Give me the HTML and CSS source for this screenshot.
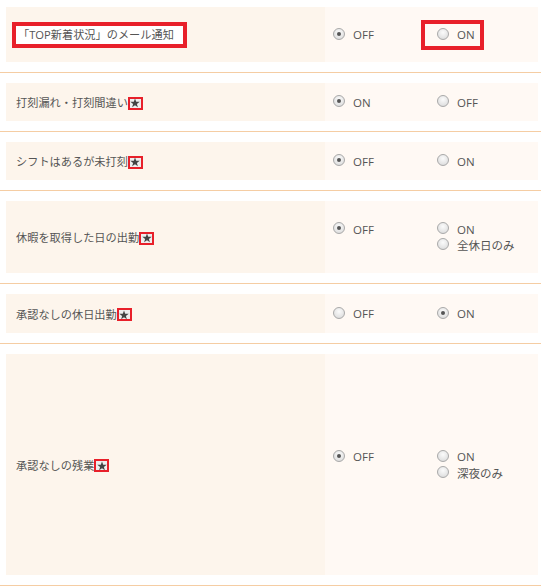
FILE: index.html
```html
<!DOCTYPE html>
<html lang="ja">
<head>
<meta charset="utf-8">
<link rel="stylesheet" href="styles.css">
</head>
<body>
<div class="list">
  <div class="row first">
    <div class="label h55"><span class="hlbox">「TOP新着状況」のメール通知</span></div>
    <div class="opts">
      <div class="group">
        <div class="col1"><div class="opt"><span class="radio on"></span>OFF</div></div>
        <div class="col2"><div class="opt hl"><span class="radio"></span>ON</div></div>
      </div>
    </div>
  </div>
  <div class="row">
    <div class="label h38">打刻漏れ・打刻間違い<span class="star"><svg viewBox="0 0 10 10" width="10" height="10"><path d="M5 0.4 6.2 3.7 9.7 3.8 6.9 5.9 7.9 9.3 5 7.3 2.1 9.3 3.1 5.9 0.3 3.8 3.8 3.7Z"/></svg></span></div>
    <div class="opts">
      <div class="group">
        <div class="col1"><div class="opt"><span class="radio on"></span>ON</div></div>
        <div class="col2"><div class="opt"><span class="radio"></span>OFF</div></div>
      </div>
    </div>
  </div>
  <div class="row">
    <div class="label h38">シフトはあるが未打刻<span class="star"><svg viewBox="0 0 10 10" width="10" height="10"><path d="M5 0.4 6.2 3.7 9.7 3.8 6.9 5.9 7.9 9.3 5 7.3 2.1 9.3 3.1 5.9 0.3 3.8 3.8 3.7Z"/></svg></span></div>
    <div class="opts">
      <div class="group">
        <div class="col1"><div class="opt"><span class="radio on"></span>OFF</div></div>
        <div class="col2"><div class="opt"><span class="radio"></span>ON</div></div>
      </div>
    </div>
  </div>
  <div class="row">
    <div class="label h72">休暇を取得した日の出勤<span class="star"><svg viewBox="0 0 10 10" width="10" height="10"><path d="M5 0.4 6.2 3.7 9.7 3.8 6.9 5.9 7.9 9.3 5 7.3 2.1 9.3 3.1 5.9 0.3 3.8 3.8 3.7Z"/></svg></span></div>
    <div class="opts">
      <div class="group">
        <div class="col1"><div class="opt"><span class="radio on"></span>OFF</div></div>
        <div class="col2"><div class="opt"><span class="radio"></span>ON</div><div class="opt"><span class="radio"></span>全休日のみ</div></div>
      </div>
    </div>
  </div>
  <div class="row">
    <div class="label h39">承認なしの休日出勤<span class="star"><svg viewBox="0 0 10 10" width="10" height="10"><path d="M5 0.4 6.2 3.7 9.7 3.8 6.9 5.9 7.9 9.3 5 7.3 2.1 9.3 3.1 5.9 0.3 3.8 3.8 3.7Z"/></svg></span></div>
    <div class="opts">
      <div class="group">
        <div class="col1"><div class="opt"><span class="radio"></span>OFF</div></div>
        <div class="col2"><div class="opt"><span class="radio on"></span>ON</div></div>
      </div>
    </div>
  </div>
  <div class="row">
    <div class="label h221">承認なしの残業<span class="star"><svg viewBox="0 0 10 10" width="10" height="10"><path d="M5 0.4 6.2 3.7 9.7 3.8 6.9 5.9 7.9 9.3 5 7.3 2.1 9.3 3.1 5.9 0.3 3.8 3.8 3.7Z"/></svg></span></div>
    <div class="opts">
      <div class="group">
        <div class="col1"><div class="opt"><span class="radio on"></span>OFF</div></div>
        <div class="col2"><div class="opt"><span class="radio"></span>ON</div><div class="opt"><span class="radio"></span>深夜のみ</div></div>
      </div>
    </div>
  </div>
</div>
</body>
</html>
```
FILE: styles.css
```css
html, body {
  margin: 0;
  padding: 0;
  background: #fff;
}
body {
  font-family: "Open Sans", "Noto Sans CJK JP", sans-serif;
  font-size: 11px;
  color: #555;
}
.list {
  width: 541px;
}
.row {
  display: grid;
  grid-template-columns: 319px 213px;
  padding: 10px 0 10px 6px;
  border-bottom: 1px solid #f5cda3;
}
.row.first {
  padding-top: 7px;
}
.label {
  background: #fdf5ec;
  display: flex;
  align-items: center;
  padding-left: 10px;
  white-space: nowrap;
  font-size: 11.2px;
}
.h55 { height: 55px; }
.h38 { height: 38px; }
.h39 { height: 39px; }
.h72 { height: 72px; }
.h221 { height: 221px; }
.hlbox {
  margin-left: -4px;
  border: 4px solid #e8202a;
  background: #fff;
  padding: 0 9px 0 2px;
  line-height: 18px;
}
.star {
  display: inline-flex;
  align-items: center;
  justify-content: center;
  width: 11px;
  height: 9px;
  border: 2px solid #e8202a;
  background: #eee;
  margin-top: 2px;
}
.star svg {
  fill: #444;
  display: block;
}
.opts {
  background: #fff9f4;
  display: flex;
  align-items: center;
  padding-left: 8px;
  font-size: 11.5px;
}
.group {
  display: flex;
  align-items: flex-start;
}
.col1 {
  width: 104px;
}
.col2 {
  display: flex;
  flex-direction: column;
}
.opt {
  display: flex;
  align-items: center;
  gap: 8px;
  height: 16px;
  position: relative;
}
.opt.hl::after {
  content: "";
  position: absolute;
  left: -16px;
  top: -7px;
  width: 55px;
  height: 22px;
  border: 4px solid #e8202a;
}
.radio {
  width: 10px;
  height: 10px;
  border-radius: 50%;
  border: 1px solid #a9a9a9;
  background: radial-gradient(circle at 50% 35%, #fbfbfb 0%, #e2e2e2 70%, #d0d0d0 100%);
  display: inline-flex;
  align-items: center;
  justify-content: center;
  flex: none;
  margin-top: -2px;
}
.radio.on::after {
  content: "";
  width: 4px;
  height: 4px;
  border-radius: 50%;
  background: #555;
}
```
